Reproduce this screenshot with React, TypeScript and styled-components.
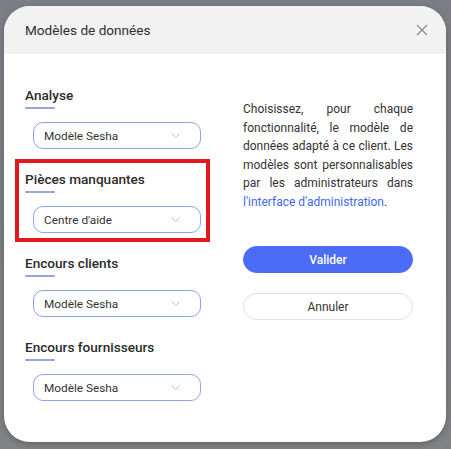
import styled, { createGlobalStyle } from "styled-components";

const GlobalStyle = createGlobalStyle`
  html, body {
    margin: 0;
    padding: 0;
    background: #7f8185;
    font-family: Roboto, "Liberation Sans", sans-serif;
  }
`;

const Overlay = styled.div`
  width: 451px;
  height: 449px;
  box-sizing: border-box;
  padding: 6px 5px 7px 4px;
  background: linear-gradient(180deg, #7b7e84 0%, #808286 100%);
`;

const Modal = styled.div`
  width: 442px;
  height: 436px;
  border-radius: 26px;
  background: #ffffff;
  overflow: hidden;
  box-shadow: 0 2px 6px rgba(0, 0, 0, 0.25);
  display: flex;
  flex-direction: column;
`;

const Header = styled.div`
  height: 48px;
  flex-shrink: 0;
  background: #f2f2f2;
  display: flex;
  align-items: center;
  justify-content: space-between;
  padding: 0 17px 0 21px;
`;

const Title = styled.h2`
  margin: 0;
  font-size: 13.6px;
  font-weight: 400;
  color: #2f2f2f;
`;

const CloseButton = styled.button`
  border: none;
  background: none;
  padding: 0;
  width: 14px;
  height: 14px;
  display: flex;
  align-items: center;
  justify-content: center;
  cursor: pointer;
`;

const Body = styled.div`
  display: grid;
  grid-template-columns: 190px 170px;
  column-gap: 28px;
  padding: 32px 33px 0 21px;
`;

const LeftColumn = styled.div`
  display: flex;
  flex-direction: column;
  gap: 21px;
`;

interface ISection {
  highlighted?: boolean;
}

const Section = styled.div<ISection>`
  position: relative;
  display: flex;
  flex-direction: column;
  &::after {
    content: "";
    display: ${(props) => (props.highlighted ? "block" : "none")};
    position: absolute;
    top: -11px;
    left: -10px;
    right: 5px;
    bottom: -9px;
    border: 4px solid #e3171f;
    pointer-events: none;
  }
`;

const SectionTitle = styled.h3`
  margin: 0;
  font-size: 13.6px;
  line-height: 18px;
  font-weight: 500;
  color: #2b2b2b;
`;

const Underline = styled.div`
  width: 30px;
  height: 2px;
  margin-top: 3px;
  border-radius: 1px;
  background: #9aa3dc;
`;

const Select = styled.div`
  margin: 13px 0 0 8px;
  width: 168px;
  height: 27px;
  box-sizing: border-box;
  border: 1px solid #8fa3f2;
  border-radius: 10px;
  display: flex;
  align-items: center;
  justify-content: space-between;
  padding: 0 20px 0 10px;
  font-size: 11.8px;
  color: #333333;
`;

const RightColumn = styled.div`
  padding-top: 14px;
  display: flex;
  flex-direction: column;
`;

const Description = styled.p`
  margin: 0;
  font-size: 12px;
  line-height: 18.5px;
  color: #333333;
  text-align: justify;
  a {
    color: #3f67f2;
    text-decoration: none;
  }
`;

interface IButton {
  primary?: boolean;
}

const Button = styled.button<IButton>`
  width: 170px;
  height: 27px;
  border-radius: 14px;
  font-family: Roboto, "Liberation Sans", sans-serif;
  font-size: 12px;
  font-weight: ${(props) => (props.primary ? 500 : 400)};
  color: ${(props) => (props.primary ? "#ffffff" : "#333333")};
  background: ${(props) => (props.primary ? "#4a6cf7" : "#ffffff")};
  border: 1px solid ${(props) => (props.primary ? "#4a6cf7" : "#e1e1e1")};
  cursor: pointer;
`;

const ButtonGroup = styled.div`
  margin-top: 35px;
  display: flex;
  flex-direction: column;
  gap: 20px;
`;

const Chevron = () => (
  <svg width="9" height="5" viewBox="0 0 9 5">
    <path d="M0.5 0.5 L4.5 4.5 L8.5 0.5" fill="none" stroke="#c2c2c2" strokeWidth="1" />
  </svg>
);

const sections = [
  { title: "Analyse", value: "Modèle Sesha" },
  { title: "Pièces manquantes", value: "Centre d'aide", highlighted: true },
  { title: "Encours clients", value: "Modèle Sesha" },
  { title: "Encours fournisseurs", value: "Modèle Sesha" },
];

const App = () => {
  return (
    <>
      <GlobalStyle />
      <Overlay>
        <Modal>
          <Header>
            <Title>Modèles de données</Title>
            <CloseButton aria-label="Fermer">
              <svg width="12" height="12" viewBox="0 0 12 12">
                <path d="M1 1 L11 11 M11 1 L1 11" stroke="#8a8a8a" strokeWidth="1.2" />
              </svg>
            </CloseButton>
          </Header>
          <Body>
            <LeftColumn>
              {sections.map((s) => (
                <Section key={s.title} highlighted={s.highlighted}>
                  <SectionTitle>{s.title}</SectionTitle>
                  <Underline />
                  <Select>
                    <span>{s.value}</span>
                    <Chevron />
                  </Select>
                </Section>
              ))}
            </LeftColumn>
            <RightColumn>
              <Description>
                Choisissez, pour chaque fonctionnalité, le modèle de données
                adapté à ce client. Les modèles sont personnalisables par les
                administrateurs dans <a href="#">l'interface d'administration</a>.
              </Description>
              <ButtonGroup>
                <Button primary>Valider</Button>
                <Button>Annuler</Button>
              </ButtonGroup>
            </RightColumn>
          </Body>
        </Modal>
      </Overlay>
    </>
  );
};

export default App;
